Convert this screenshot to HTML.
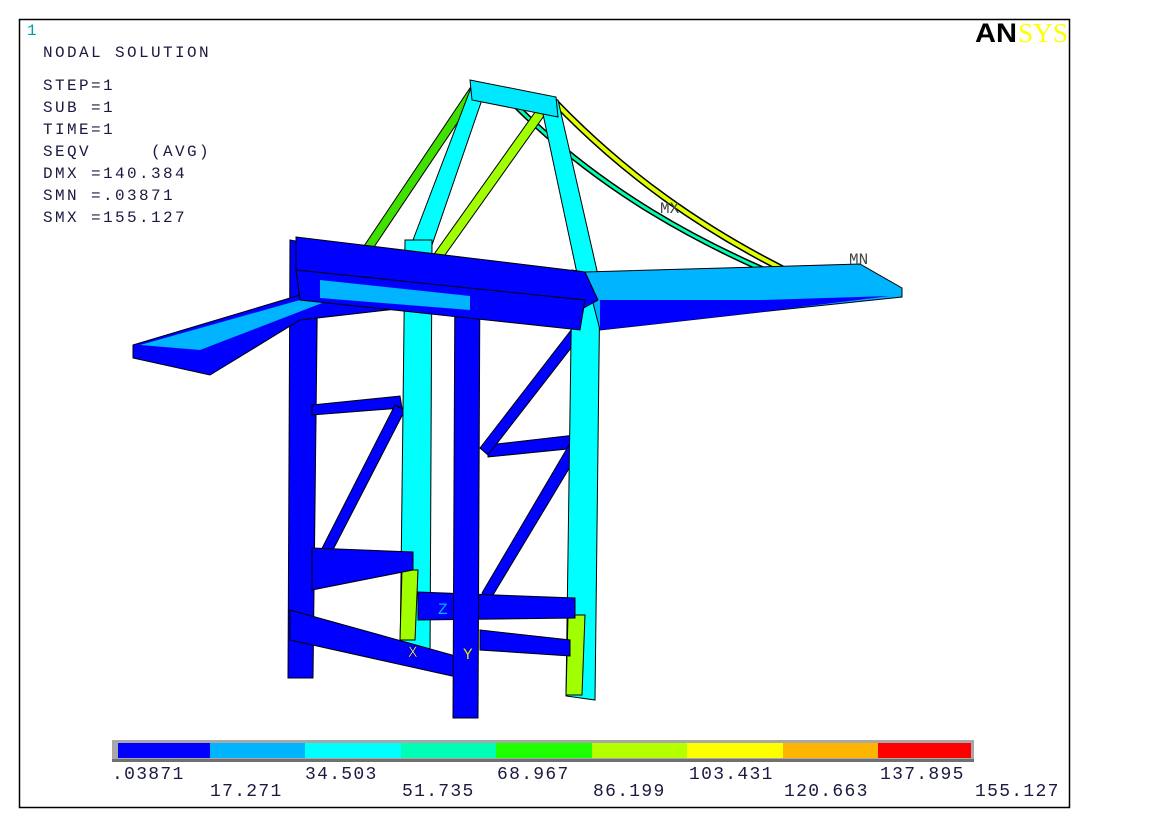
<!DOCTYPE html>
<html><head><meta charset="utf-8"><style>
html,body{margin:0;padding:0;background:#fff;width:1168px;height:827px;overflow:hidden}
svg{display:block}
text{font-family:"Liberation Mono",monospace;font-size:16px;white-space:pre}
.m{letter-spacing:2.4px}
</style></head><body>
<svg width="1168" height="827" viewBox="0 0 1168 827" xmlns="http://www.w3.org/2000/svg" xml:space="preserve">
<rect x="19.5" y="19.5" width="1050" height="788" fill="#fff" stroke="#000" stroke-width="1.5"/>
<text x="27" y="35" fill="#00a0a0" font-size="16">1</text>
<g fill="#1a1a40" class="m">
<text x="43" y="57" class="m">NODAL SOLUTION</text>
<text x="43" y="90" class="m">STEP=1</text>
<text x="43" y="112" class="m">SUB =1</text>
<text x="43" y="134" class="m">TIME=1</text>
<text x="43" y="156" class="m">SEQV     (AVG)</text>
<text x="43" y="178" class="m">DMX =140.384</text>
<text x="43" y="200" class="m">SMN =.03871</text>
<text x="43" y="222" class="m">SMX =155.127</text>
</g>
<text x="975" y="42" style="font-family:'Liberation Sans',sans-serif;font-weight:bold;font-size:27px" fill="#000" textLength="42" lengthAdjust="spacingAndGlyphs">AN</text>
<text x="1018" y="42" style="font-family:'Liberation Serif',serif;font-size:27px" fill="#ffff00" textLength="50" lengthAdjust="spacingAndGlyphs">SYS</text>

<g stroke="#000" stroke-width="1">
<path d="M553,100 C620,170 700,230 805,280" stroke="#000" stroke-width="7" fill="none"/>
<path d="M553,100 C620,170 700,230 805,280" stroke="#e0ff00" stroke-width="4" fill="none"/>
<path d="M515,105 C600,190 700,245 800,285" stroke="#000" stroke-width="6" fill="none"/>
<path d="M515,105 C600,190 700,245 800,285" stroke="#00ffb0" stroke-width="3" fill="none"/>
<polygon points="470,88 478,92 372,250 364,246" fill="#40e000"/>
<polygon points="538,108 546,113 440,262 432,257" fill="#a0ff00"/>
<polygon points="472,85 486,88 432,245 413,240" fill="#00ffff"/>
<polygon points="540,100 558,100 598,275 578,278" fill="#00ffff"/>
<polygon points="470,80 556,97 558,117 472,100" fill="#00e8ff"/>
<polygon points="290,240 318,245 313,678 288,678" fill="#0000ff"/>
<polygon points="312,405 400,396 402,408 312,415" fill="#0000ff"/>
<polygon points="395,405 405,410 320,575 312,568" fill="#0000ff"/>
<polygon points="488,445 575,435 577,448 488,457" fill="#0000ff"/>
<polygon points="575,325 585,330 488,455 480,448" fill="#0000ff"/>
<polygon points="572,440 582,447 490,600 482,593" fill="#0000ff"/>
<polygon points="405,240 432,240 430,665 400,662" fill="#00ffff"/>
<polygon points="572,270 600,275 595,700 566,696" fill="#00ffff"/>
<polygon points="402,570 418,570 415,640 400,640" fill="#a0ff00"/>
<polygon points="568,615 585,615 582,695 566,695" fill="#a0ff00"/>
<polygon points="312,548 413,552 413,570 312,590" fill="#0000ff"/>
<polygon points="290,610 470,660 470,680 290,640" fill="#0000ff"/>
<polygon points="418,592 575,598 575,618 418,620" fill="#0000ff"/>
<polygon points="480,630 570,640 570,656 480,650" fill="#0000ff"/>
<polygon points="455,260 480,262 478,718 453,718" fill="#0000ff"/>
<polygon points="585,272 860,264 902,288 902,297 760,312 600,330" fill="#00b4ff"/>
<polygon points="600,300 760,300 890,296 760,312 600,330" fill="#0000ff" stroke="none"/>
<polygon points="133,345 300,295 470,268 475,300 300,320 210,375 133,358" fill="#0000ff"/>
<polygon points="140,345 300,300 330,300 200,350" fill="#00b4ff" stroke="none"/>
<polygon points="296,237 585,272 598,300 580,310 296,270" fill="#0000ff"/>
<polygon points="296,270 585,300 580,330 300,300" fill="#0000ff"/>
<polygon points="320,280 470,296 470,310 320,298" fill="#00b4ff" stroke="none"/>
</g>
<text x="438" y="614" fill="#00b4ff" font-size="14">Z</text>
<text x="408" y="657" fill="#fff" stroke="#000" stroke-width=".5" font-size="14">X</text>
<text x="463" y="659" fill="#e0e000" font-size="14">Y</text>
<text x="660" y="213" fill="#444" font-size="13">MX</text>
<text x="849" y="264" fill="#444" font-size="13">MN</text>

<rect x="112" y="740" width="862" height="22" fill="#a8a8a8"/>
<rect x="112" y="759" width="862" height="3" fill="#707070"/>
<g>
<rect x="118" y="743" width="92" height="15" fill="#0000ff"/>
<rect x="210" y="743" width="95" height="15" fill="#00b4ff"/>
<rect x="305" y="743" width="96" height="15" fill="#00ffff"/>
<rect x="401" y="743" width="95" height="15" fill="#00ffb4"/>
<rect x="496" y="743" width="96" height="15" fill="#1eff00"/>
<rect x="592" y="743" width="95" height="15" fill="#b4ff00"/>
<rect x="687" y="743" width="96" height="15" fill="#ffff00"/>
<rect x="783" y="743" width="95" height="15" fill="#ffb400"/>
<rect x="878" y="743" width="93" height="15" fill="#ff0000"/>
</g>
<g fill="#1a1a40" style="font-size:18px">
<text x="112" y="779" style="font-size:18px;letter-spacing:1.3px">.03871</text>
<text x="305" y="779" style="font-size:18px;letter-spacing:1.3px">34.503</text>
<text x="497" y="779" style="font-size:18px;letter-spacing:1.3px">68.967</text>
<text x="689" y="779" style="font-size:18px;letter-spacing:1.3px">103.431</text>
<text x="880" y="779" style="font-size:18px;letter-spacing:1.3px">137.895</text>
<text x="210" y="796" style="font-size:18px;letter-spacing:1.3px">17.271</text>
<text x="402" y="796" style="font-size:18px;letter-spacing:1.3px">51.735</text>
<text x="593" y="796" style="font-size:18px;letter-spacing:1.3px">86.199</text>
<text x="784" y="796" style="font-size:18px;letter-spacing:1.3px">120.663</text>
<text x="975" y="796" style="font-size:18px;letter-spacing:1.3px">155.127</text>
</g>
</svg>
</body></html>
